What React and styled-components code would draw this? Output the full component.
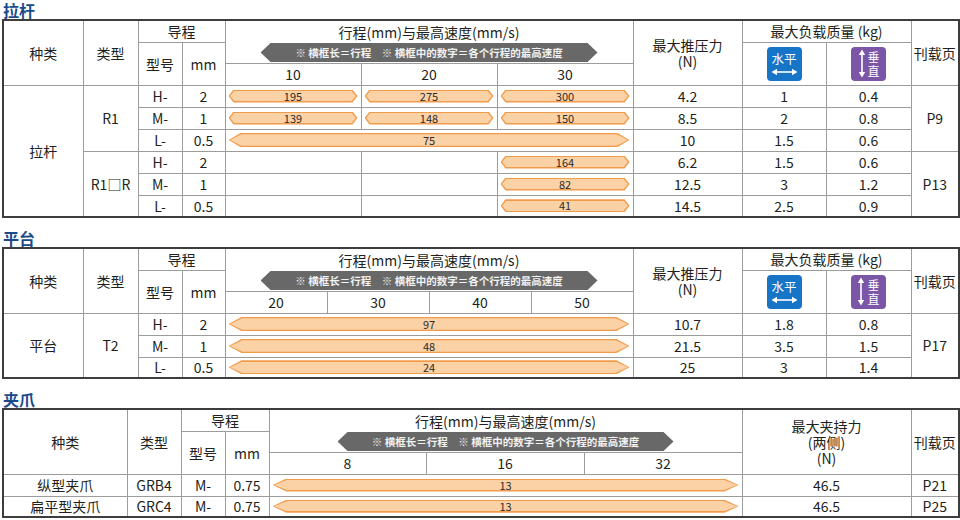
import React from 'react';
import styled, { createGlobalStyle } from 'styled-components';

const Global = createGlobalStyle`
  html, body { margin: 0; padding: 0; background: #fff; }
  body { font-family: "Noto Sans CJK SC", "Noto Sans", sans-serif; color: #231f20; }
`;

const Page = styled.div`
  width: 960px;
  padding: 0 2px;
  box-sizing: border-box;
`;

const Section = styled.section`
  margin-top: ${(p) => p.$gap || 0}px;
`;

const Title = styled.h2`
  margin: 0;
  height: 19px;
  font-size: 16px;
  line-height: 20px;
  font-weight: 700;
  color: #1b4a8b;
  padding-left: 1px;
`;

const Table = styled.table`
  width: 956px;
  border-collapse: collapse;
  table-layout: fixed;
  border: 2px solid #3d3d3d;
`;

const Col = styled.col`
  width: ${(p) => p.$w}px;
`;

const Row = styled.tr`
  height: ${(p) => p.$h || 22}px;
`;

const Th = styled.th`
  border: 1px solid #9c9c9c;
  font-weight: 400;
  font-size: 14px;
  line-height: 16px;
  padding: 0;
  text-align: center;
  vertical-align: ${(p) => (p.$top ? 'top' : 'middle')};
  color: #231f20;
`;

const Td = styled.td`
  border: 1px solid #9c9c9c;
  font-size: 14px;
  line-height: 16px;
  padding: ${(p) => (p.$bar ? '0 3px' : '0')};
  text-align: center;
  vertical-align: middle;
  color: #231f20;
`;

const StrokeTitle = styled.div`
  height: 22px;
  line-height: 22px;
  font-size: 14px;
`;

const Banner = styled.div`
  width: ${(p) => p.$w}px;
  height: 19px;
  margin: 0 auto;
  background: #686868;
  color: #f2f2f2;
  font-size: 10.5px;
  font-weight: 700;
  line-height: 19px;
  white-space: nowrap;
  clip-path: polygon(0 50%, 10px 0, calc(100% - 10px) 0, 100% 50%, calc(100% - 10px) 100%, 10px 100%);
`;

const shape = (t) =>
  `polygon(0 50%, ${t}px 0, calc(100% - ${t}px) 0, 100% 50%, calc(100% - ${t}px) 100%, ${t}px 100%)`;

const BarShape = styled.div`
  position: relative;
  height: ${(p) => p.$h || 13}px;
  display: flex;
  align-items: center;
  justify-content: center;
  font-size: 11px;
  color: #2a2a2a;
  &::before {
    content: '';
    position: absolute;
    inset: 0;
    background: #f29b4b;
    clip-path: ${(p) => shape(p.$tip)};
  }
  &::after {
    content: '';
    position: absolute;
    inset: 1.3px 1.6px;
    background: #fbd1a6;
    clip-path: ${(p) => shape(p.$tip - 0.6)};
  }
`;

const BarLabel = styled.span`
  position: relative;
  z-index: 1;
  line-height: 13px;
`;

const Bar = ({ v, tip = 5, h }) => (
  <BarShape $tip={tip} $h={h}>
    <BarLabel>{v}</BarLabel>
  </BarShape>
);

const LoadIcon = styled.div`
  width: 35px;
  height: 34px;
  margin: 0 auto;
  border-radius: 4px;
  background: ${(p) => p.$bg};
  color: #fff;
  display: flex;
  flex-direction: ${(p) => (p.$row ? 'row' : 'column')};
  align-items: center;
  justify-content: center;
  gap: ${(p) => (p.$row ? 2 : 3)}px;
  box-sizing: border-box;
`;

const IconText = styled.span`
  font-size: 12.5px;
  line-height: 13px;
`;

const Stack = styled.div`
  display: flex;
  flex-direction: column;
  font-size: 12px;
  line-height: 14px;
`;

const HorizontalIcon = () => (
  <LoadIcon $bg="#1675c6">
    <IconText>水平</IconText>
    <svg width="27" height="8" viewBox="0 0 27 8">
      <path d="M4 4 H23" stroke="#fff" strokeWidth="1.6" />
      <path d="M0.5 4 L6 0.8 L6 7.2 Z M26.5 4 L21 0.8 L21 7.2 Z" fill="#fff" />
    </svg>
  </LoadIcon>
);

const VerticalIcon = () => (
  <LoadIcon $bg="#7b55a6" $row>
    <svg width="8" height="29" viewBox="0 0 8 29">
      <path d="M4 4 V25" stroke="#fff" strokeWidth="1.6" />
      <path d="M4 0.5 L0.8 6 L7.2 6 Z M4 28.5 L0.8 23 L7.2 23 Z" fill="#fff" />
    </svg>
    <Stack>
      <span>垂</span>
      <span>直</span>
    </Stack>
  </LoadIcon>
);

const Note = '※ 横框长＝行程　※ 横框中的数字＝各个行程的最高速度';

/* ---------------- 拉杆 ---------------- */
const rodRows = [
  { grp: 'R1', m: 'H-', mm: '2', bars: ['195', '275', '300'], f: '4.2', h: '1', v: '0.4', page: 'P9' },
  { m: 'M-', mm: '1', bars: ['139', '148', '150'], f: '8.5', h: '2', v: '0.8' },
  { m: 'L-', mm: '0.5', span: '75', f: '10', h: '1.5', v: '0.6' },
  { grp: 'R1□R', m: 'H-', mm: '2', bars: [null, null, '164'], f: '6.2', h: '1.5', v: '0.6', page: 'P13' },
  { m: 'M-', mm: '1', bars: [null, null, '82'], f: '12.5', h: '3', v: '1.2' },
  { m: 'L-', mm: '0.5', bars: [null, null, '41'], f: '14.5', h: '2.5', v: '0.9' },
];

const LoadHeadRow = ({ stroke, span }) => null;

const RodTable = () => (
  <Table>
    <colgroup>
      {[80, 55, 44, 43, 136, 136, 136, 109, 84, 85, 48].map((w, i) => (
        <Col key={i} $w={w} />
      ))}
    </colgroup>
    <thead>
      <Row $h={22}>
        <Th rowSpan={3}>种类</Th>
        <Th rowSpan={3}>类型</Th>
        <Th colSpan={2}>导程</Th>
        <Th colSpan={3} rowSpan={2} $top>
          <StrokeTitle>行程(mm)与最高速度(mm/s)</StrokeTitle>
          <Banner $w={337}>{Note}</Banner>
        </Th>
        <Th rowSpan={3}>
          最大推压力
          <br />
          (N)
        </Th>
        <Th colSpan={2}>最大负载质量 (kg)</Th>
        <Th rowSpan={3}>刊载页</Th>
      </Row>
      <Row $h={21}>
        <Th rowSpan={2}>型号</Th>
        <Th rowSpan={2}>mm</Th>
        <Th rowSpan={2}>
          <HorizontalIcon />
        </Th>
        <Th rowSpan={2}>
          <VerticalIcon />
        </Th>
      </Row>
      <Row $h={22}>
        <Th>10</Th>
        <Th>20</Th>
        <Th>30</Th>
      </Row>
    </thead>
    <tbody>
      {rodRows.map((r, i) => (
        <Row key={i} $h={22}>
          {i === 0 && <Td rowSpan={6}>拉杆</Td>}
          {r.grp && <Td rowSpan={3}>{r.grp}</Td>}
          <Td>{r.m}</Td>
          <Td>{r.mm}</Td>
          {r.span ? (
            <Td colSpan={3} $bar>
              <Bar v={r.span} tip={12} h={14} />
            </Td>
          ) : (
            r.bars.map((b, j) => (
              <Td key={j} $bar>
                {b && <Bar v={b} tip={5} />}
              </Td>
            ))
          )}
          <Td>{r.f}</Td>
          <Td>{r.h}</Td>
          <Td>{r.v}</Td>
          {r.page && <Td rowSpan={3}>{r.page}</Td>}
        </Row>
      ))}
    </tbody>
  </Table>
);

/* ---------------- 平台 ---------------- */
const stageRows = [
  { m: 'H-', mm: '2', s: '97', f: '10.7', h: '1.8', v: '0.8' },
  { m: 'M-', mm: '1', s: '48', f: '21.5', h: '3.5', v: '1.5' },
  { m: 'L-', mm: '0.5', s: '24', f: '25', h: '3', v: '1.4' },
];

const StageTable = () => (
  <Table>
    <colgroup>
      {[80, 55, 44, 43, 102, 102, 102, 102, 109, 84, 85, 48].map((w, i) => (
        <Col key={i} $w={w} />
      ))}
    </colgroup>
    <thead>
      <Row $h={22}>
        <Th rowSpan={3}>种类</Th>
        <Th rowSpan={3}>类型</Th>
        <Th colSpan={2}>导程</Th>
        <Th colSpan={4} rowSpan={2} $top>
          <StrokeTitle>行程(mm)与最高速度(mm/s)</StrokeTitle>
          <Banner $w={337}>{Note}</Banner>
        </Th>
        <Th rowSpan={3}>
          最大推压力
          <br />
          (N)
        </Th>
        <Th colSpan={2}>最大负载质量 (kg)</Th>
        <Th rowSpan={3}>刊载页</Th>
      </Row>
      <Row $h={21}>
        <Th rowSpan={2}>型号</Th>
        <Th rowSpan={2}>mm</Th>
        <Th rowSpan={2}>
          <HorizontalIcon />
        </Th>
        <Th rowSpan={2}>
          <VerticalIcon />
        </Th>
      </Row>
      <Row $h={22}>
        <Th>20</Th>
        <Th>30</Th>
        <Th>40</Th>
        <Th>50</Th>
      </Row>
    </thead>
    <tbody>
      {stageRows.map((r, i) => (
        <Row key={i} $h={i === 2 ? 21 : 22}>
          {i === 0 && <Td rowSpan={3}>平台</Td>}
          {i === 0 && <Td rowSpan={3}>T2</Td>}
          <Td>{r.m}</Td>
          <Td>{r.mm}</Td>
          <Td colSpan={4} $bar>
            <Bar v={r.s} tip={13} h={14} />
          </Td>
          <Td>{r.f}</Td>
          <Td>{r.h}</Td>
          <Td>{r.v}</Td>
          {i === 0 && <Td rowSpan={3}>P17</Td>}
        </Row>
      ))}
    </tbody>
  </Table>
);

/* ---------------- 夹爪 ---------------- */
const gripRows = [
  { kind: '纵型夹爪', type: 'GRB4', m: 'M-', mm: '0.75', s: '13', f: '46.5', page: 'P21' },
  { kind: '扁平型夹爪', type: 'GRC4', m: 'M-', mm: '0.75', s: '13', f: '46.5', page: 'P25' },
];

const GripTable = () => (
  <Table>
    <colgroup>
      {[124, 54, 44, 44, 157, 158, 158, 169, 48].map((w, i) => (
        <Col key={i} $w={w} />
      ))}
    </colgroup>
    <thead>
      <Row $h={22}>
        <Th rowSpan={3}>种类</Th>
        <Th rowSpan={3}>类型</Th>
        <Th colSpan={2}>导程</Th>
        <Th colSpan={3} rowSpan={2} $top>
          <StrokeTitle>行程(mm)与最高速度(mm/s)</StrokeTitle>
          <Banner $w={336}>{Note}</Banner>
        </Th>
        <Th rowSpan={3}>
          最大夹持力
          <br />
          (两侧)
          <br />
          (N)
        </Th>
        <Th rowSpan={3}>刊载页</Th>
      </Row>
      <Row $h={21}>
        <Th rowSpan={2}>型号</Th>
        <Th rowSpan={2}>mm</Th>
      </Row>
      <Row $h={22}>
        <Th>8</Th>
        <Th>16</Th>
        <Th>32</Th>
      </Row>
    </thead>
    <tbody>
      {gripRows.map((r, i) => (
        <Row key={i} $h={i === 1 ? 21 : 22}>
          <Td>{r.kind}</Td>
          <Td>{r.type}</Td>
          <Td>{r.m}</Td>
          <Td>{r.mm}</Td>
          <Td colSpan={3} $bar>
            <Bar v={r.s} tip={14} h={13} />
          </Td>
          <Td>{r.f}</Td>
          <Td>{r.page}</Td>
        </Row>
      ))}
    </tbody>
  </Table>
);

export default function App() {
  return (
    <Page>
      <Global />
      <Section>
        <Title>拉杆</Title>
        <RodTable />
      </Section>
      <Section $gap={10}>
        <Title>平台</Title>
        <StageTable />
      </Section>
      <Section $gap={10}>
        <Title>夹爪</Title>
        <GripTable />
      </Section>
    </Page>
  );
}
